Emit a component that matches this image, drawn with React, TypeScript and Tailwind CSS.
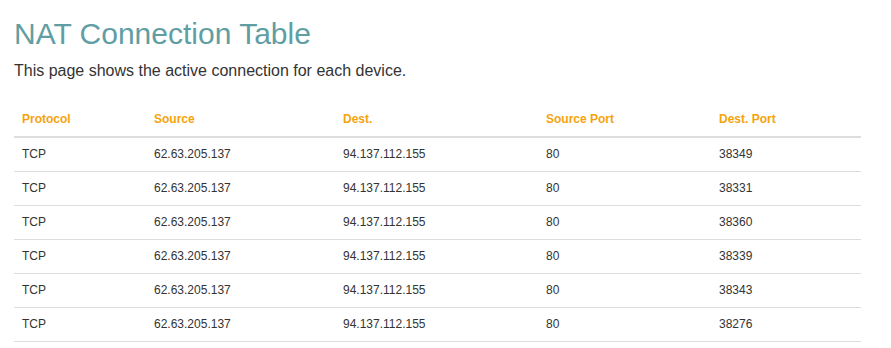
const rows = [
  { proto: 'TCP', src: '62.63.205.137', dst: '94.137.112.155', sport: '80', dport: '38349' },
  { proto: 'TCP', src: '62.63.205.137', dst: '94.137.112.155', sport: '80', dport: '38331' },
  { proto: 'TCP', src: '62.63.205.137', dst: '94.137.112.155', sport: '80', dport: '38360' },
  { proto: 'TCP', src: '62.63.205.137', dst: '94.137.112.155', sport: '80', dport: '38339' },
  { proto: 'TCP', src: '62.63.205.137', dst: '94.137.112.155', sport: '80', dport: '38343' },
  { proto: 'TCP', src: '62.63.205.137', dst: '94.137.112.155', sport: '80', dport: '38276' },
];

export default function App() {
  return (
    <div className="min-h-screen bg-white px-[14px] pt-[17px] text-[#333] font-['Liberation_Sans',Arial,sans-serif]">
      <h1 className="text-[30px] leading-[33px] text-[#5f9ea3]">NAT Connection Table</h1>
      <p className="mt-[10px] text-[16px] leading-[22.86px]">
        This page shows the active connection for each device.
      </p>

      {/* connection list */}
      <table className="mt-[20px] w-[847px] table-fixed border-collapse text-[12px] leading-[17px]">
        <colgroup>
          <col className="w-[132px]" />
          <col className="w-[189px]" />
          <col className="w-[203px]" />
          <col className="w-[173px]" />
          <col className="w-[150px]" />
        </colgroup>
        <thead>
          <tr className="border-b-2 border-[#ddd] text-left font-bold text-[#f5a30c]">
            <th className="p-2">Protocol</th>
            <th className="p-2">Source</th>
            <th className="p-2">Dest.</th>
            <th className="p-2">Source Port</th>
            <th className="p-2">Dest. Port</th>
          </tr>
        </thead>
        <tbody>
          {rows.map((r, i) => (
            <tr key={i} className="border-b border-[#ddd]">
              <td className="p-2">{r.proto}</td>
              <td className="p-2">{r.src}</td>
              <td className="p-2">{r.dst}</td>
              <td className="p-2">{r.sport}</td>
              <td className="p-2">{r.dport}</td>
            </tr>
          ))}
        </tbody>
      </table>
    </div>
  );
}
